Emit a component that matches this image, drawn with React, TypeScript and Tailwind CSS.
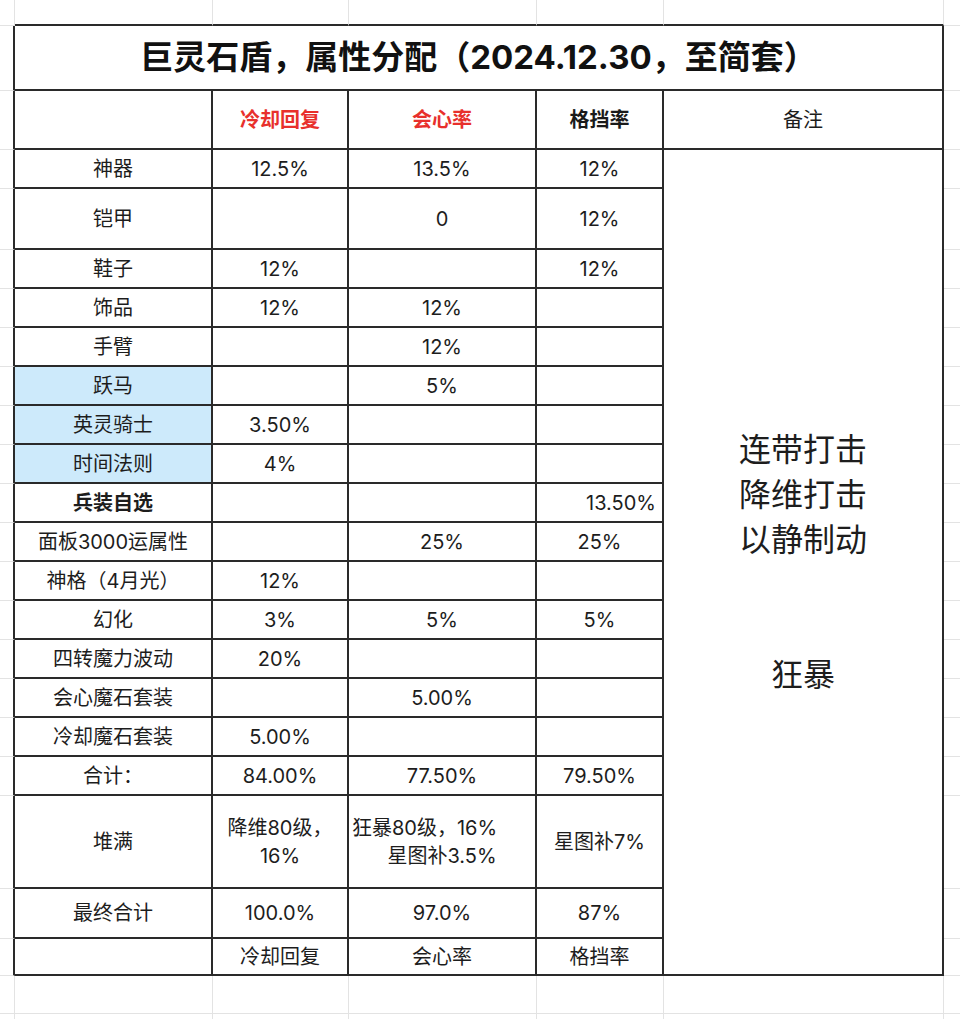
import React from "react";

const BLK = "border-r-2 border-b-2 border-[#2a2a2a]";
const LEFT_BG = "border-r-2 border-r-[#2a2a2a] border-b border-b-[#e3e3e3]";
const RIGHT_BG = "border-b border-[#e3e3e3]";
const GREY_CELL = "border-r border-b border-[#e3e3e3]";
const TOP_CELL = "border-r border-r-[#e3e3e3] border-b-2 border-b-[#2a2a2a]";

type Row = {
  label: string;
  a: string;
  b: string;
  c: string;
  blue?: boolean;
  bold?: boolean;
  cRight?: boolean;
};

const rows: Row[] = [
  { label: "神器", a: "12.5%", b: "13.5%", c: "12%" },
  { label: "铠甲", a: "", b: "0", c: "12%" },
  { label: "鞋子", a: "12%", b: "", c: "12%" },
  { label: "饰品", a: "12%", b: "12%", c: "" },
  { label: "手臂", a: "", b: "12%", c: "" },
  { label: "跃马", a: "", b: "5%", c: "", blue: true },
  { label: "英灵骑士", a: "3.50%", b: "", c: "", blue: true },
  { label: "时间法则", a: "4%", b: "", c: "", blue: true },
  { label: "兵装自选", a: "", b: "", c: "13.50%", bold: true, cRight: true },
  { label: "面板3000运属性", a: "", b: "25%", c: "25%" },
  { label: "神格（4月光）", a: "12%", b: "", c: "" },
  { label: "幻化", a: "3%", b: "5%", c: "5%" },
  { label: "四转魔力波动", a: "20%", b: "", c: "" },
  { label: "会心魔石套装", a: "", b: "5.00%", c: "" },
  { label: "冷却魔石套装", a: "5.00%", b: "", c: "" },
  { label: "合计：", a: "84.00%", b: "77.50%", c: "79.50%" },
];

function Cell({ children, className = "" }: { children?: React.ReactNode; className?: string }) {
  return (
    <div className={`flex items-center justify-center text-center ${BLK} ${className}`}>
      {children}
    </div>
  );
}

export default function App() {
  return (
    <div
      className="grid h-[1019px] w-[960px] overflow-hidden bg-white text-[20px] leading-none text-[#1d1d1d] grid-cols-[15px_198px_136px_188px_127px_280px_1fr] grid-rows-[26px_65px_59px_39px_61px_repeat(13,39px)_39px_93px_50px_37px_38px_1fr]"
      style={{ fontFamily: 'Inter, "Noto Sans CJK SC", "Noto Sans", sans-serif' }}
    >
      {/* top strip */}
      <div className={GREY_CELL} />
      <div className={TOP_CELL} />
      <div className={TOP_CELL} />
      <div className={TOP_CELL} />
      <div className={TOP_CELL} />
      <div className={TOP_CELL} />
      <div className={RIGHT_BG} />

      {/* title */}
      <div className={LEFT_BG} />
      <div className={`col-span-5 flex items-center justify-center text-[33px] font-bold text-[#111] ${BLK}`}>
        巨灵石盾，属性分配（2024.12.30，至简套）
      </div>
      <div className={RIGHT_BG} />

      {/* header */}
      <div className={LEFT_BG} />
      <Cell />
      <Cell className="font-bold text-[#e8302c]">冷却回复</Cell>
      <Cell className="font-bold text-[#e8302c]">会心率</Cell>
      <Cell className="font-bold text-[#1a1a1a]">格挡率</Cell>
      <Cell>备注</Cell>
      <div className={RIGHT_BG} />

      {rows.map((r, i) => (
        <React.Fragment key={r.label}>
          <div className={LEFT_BG} />
          <Cell className={`${r.blue ? "bg-[#cdeafb]" : ""} ${r.bold ? "font-bold" : ""}`}>{r.label}</Cell>
          <Cell>{r.a}</Cell>
          <Cell>{r.b}</Cell>
          <Cell className={r.cRight ? "justify-end pr-[6px]" : ""}>{r.c}</Cell>
          {i === 0 && (
            <div className={`row-[span_19/span_19] flex flex-col items-center justify-center text-[32px] leading-[45px] ${BLK}`}>
              <div>连带打击</div>
              <div>降维打击</div>
              <div>以静制动</div>
              <div className="h-[45px]" />
              <div className="h-[45px]" />
              <div>狂暴</div>
            </div>
          )}
          <div className={RIGHT_BG} />
        </React.Fragment>
      ))}

      {/* 堆满 */}
      <div className={LEFT_BG} />
      <Cell>堆满</Cell>
      <Cell className="flex-col leading-[28px]">
        <div>降维80级，</div>
        <div>16%</div>
      </Cell>
      <div className={`flex flex-col justify-center leading-[28px] ${BLK}`}>
        <div className="pl-[3px] text-left whitespace-nowrap">狂暴80级，16%</div>
        <div className="text-center">星图补3.5%</div>
      </div>
      <Cell>星图补7%</Cell>
      <div className={RIGHT_BG} />

      {/* 最终合计 */}
      <div className={LEFT_BG} />
      <Cell>最终合计</Cell>
      <Cell>100.0%</Cell>
      <Cell>97.0%</Cell>
      <Cell>87%</Cell>
      <div className={RIGHT_BG} />

      {/* last */}
      <div className={LEFT_BG} />
      <Cell />
      <Cell>冷却回复</Cell>
      <Cell>会心率</Cell>
      <Cell>格挡率</Cell>
      <div className={RIGHT_BG} />

      {/* bottom strip */}
      <div className={GREY_CELL} />
      <div className={GREY_CELL} />
      <div className={GREY_CELL} />
      <div className={GREY_CELL} />
      <div className={GREY_CELL} />
      <div className={GREY_CELL} />
      <div className={RIGHT_BG} />

      <div className="border-r border-[#e3e3e3]" />
      <div className="border-r border-[#e3e3e3]" />
      <div className="border-r border-[#e3e3e3]" />
      <div className="border-r border-[#e3e3e3]" />
      <div className="border-r border-[#e3e3e3]" />
      <div className="border-r border-[#e3e3e3]" />
      <div />
    </div>
  );
}
